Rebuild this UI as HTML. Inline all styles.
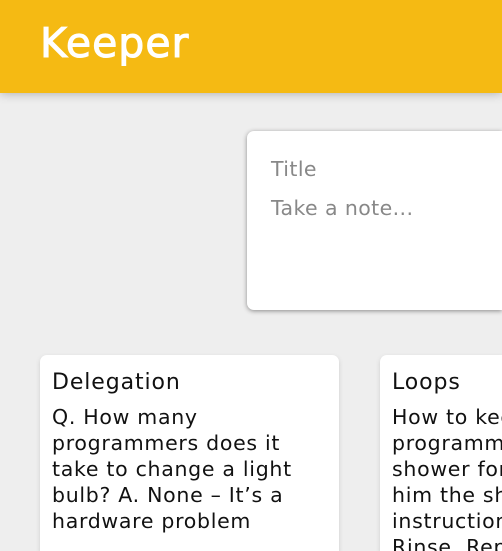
<!DOCTYPE html>
<html><head><style>
html,body{margin:0;padding:0}
#w{width:502px;height:551px;overflow:hidden;background:#eee;font-family:"DejaVu Sans","Liberation Sans",sans-serif;position:relative}
header{position:absolute;left:0;top:0;width:502px;height:93px;background:#f5ba13;box-shadow:0 0 10px rgba(0,0,0,.3)}
header h1{position:absolute;left:40px;top:19px;margin:0;color:#fff;font-size:41px;font-weight:normal;letter-spacing:1px;-webkit-text-stroke:1px #fff}
.form{position:absolute;left:247px;top:131px;width:255px;height:179px;background:#fff;border-radius:7px 0 0 7px;box-shadow:0 1px 5px rgb(138,137,137)}
.form div{position:absolute;left:24px;color:#888;font-size:20.5px;letter-spacing:0.4px}
.card{position:absolute;top:355px;height:196px;background:#fff;border-radius:7px 7px 0 0;box-shadow:0 2px 5px #ccc;padding:0 12px;box-sizing:border-box;overflow:hidden;white-space:nowrap}
.card h2{margin:14px 0 0;font-size:22px;font-weight:normal;color:#111;line-height:28px;letter-spacing:0.9px}
.card p{margin:7px 0 0;font-size:20.5px;line-height:26px;color:#111;letter-spacing:0.7px}
</style></head><body><div id="w">
<header><h1>Keeper</h1></header>
<div class="form"><div style="top:26px">Title</div><div style="top:65px">Take a note...</div></div>
<div class="card" style="left:40px;width:299px"><h2>Delegation</h2><p>Q. How many<br>programmers does it<br>take to change a light<br>bulb? A. None – It’s a<br>hardware problem</p></div>
<div class="card" style="left:380px;width:122px;border-radius:7px 0 0 0"><h2>Loops</h2><p>How to keep a<br>programmer in the<br>shower forever? Give<br>him the shampoo<br>instructions: Lather,<br>Rinse, Repeat.</p></div>
</div></body></html>
